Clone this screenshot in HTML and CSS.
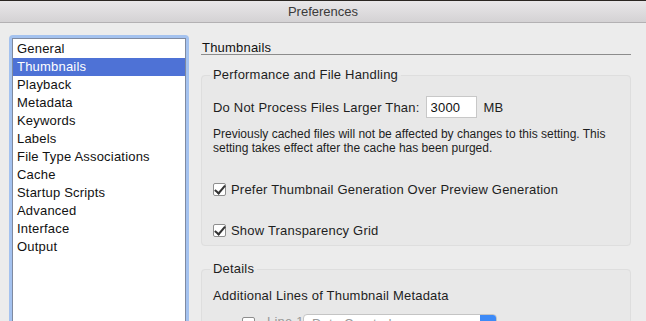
FILE: index.html
```html
<!DOCTYPE html>
<html lang="en">
<head>
    <meta charset="UTF-8">
    <title>Preferences</title>
    <link rel="stylesheet" href="styles.css">
</head>
<body>
    <div class="titlebar">Preferences</div>

    <div class="window">
        <div class="sidebar">
            <ul class="category-list">
                <li>General</li>
                <li class="selected">Thumbnails</li>
                <li>Playback</li>
                <li>Metadata</li>
                <li>Keywords</li>
                <li>Labels</li>
                <li>File Type Associations</li>
                <li>Cache</li>
                <li>Startup Scripts</li>
                <li>Advanced</li>
                <li>Interface</li>
                <li>Output</li>
            </ul>
        </div>

        <div class="panel">
            <div class="panel-title">Thumbnails</div>

            <fieldset class="group">
                <legend>Performance and File Handling</legend>
                <div class="size-row">
                    <span>Do Not Process Files Larger Than:</span>
                    <input type="text" class="size-input" value="3000">
                    <span class="unit">MB</span>
                </div>
                <p class="note">Previously cached files will not be affected by changes to this setting. This setting takes effect after the cache has been purged.</p>
                <label class="check-row first">
                    <span class="checkbox checked"></span>
                    Prefer Thumbnail Generation Over Preview Generation
                </label>
                <label class="check-row">
                    <span class="checkbox checked"></span>
                    Show Transparency Grid
                </label>
            </fieldset>

            <fieldset class="group details">
                <legend>Details</legend>
                <div class="details-label">Additional Lines of Thumbnail Metadata</div>
                <div class="meta-row">
                    <span class="checkbox"></span>
                    <span class="line-label">Line 1</span>
                    <span class="popup">
                        <span class="popup-text">Date Created</span>
                        <span class="popup-arrow"></span>
                    </span>
                </div>
            </fieldset>
        </div>
    </div>
</body>
</html>
```

FILE: styles.css
```css
* {
    margin: 0;
    padding: 0;
    box-sizing: border-box;
}

body {
    background-color: #ececec;
    color: #1e1e1e;
    font-family: "Liberation Sans", Arial, sans-serif;
    font-size: 13px;
    letter-spacing: 0.2px;
    width: 646px;
    height: 321px;
    overflow: hidden;
}

.titlebar {
    height: 23px;
    border-top: 1px solid #2b2622;
    border-bottom: 1px solid #b3b1b3;
    background: linear-gradient(#e9e7e9, #d4d2d4);
    text-align: center;
    line-height: 21px;
    letter-spacing: 0;
    color: #3a3a3a;
}

.window {
    display: flex;
    align-items: flex-start;
}

/* Category list */
.sidebar {
    margin: 12px 0 0 9px;
    width: 180px;
    height: 300px;
    padding: 3px;
    border-radius: 4px;
    background-color: #a4c2ef;
}

.category-list {
    list-style: none;
    height: 100%;
    background-color: #fff;
    border: 1px solid #7f8aa0;
    padding-top: 1px;
}

.category-list li {
    height: 18px;
    line-height: 18px;
    padding-left: 4px;
    color: #111;
}

.category-list li.selected {
    background-color: #4e72d6;
    color: #fff;
}

/* Right panel */
.panel {
    margin-left: 12px;
    width: 430px;
    padding-top: 19px;
}

.panel-title {
    height: 13px;
    line-height: 12px;
    padding-left: 1px;
    border-bottom: 1px solid #8c8c8c;
    color: #111;
}

.group {
    margin-top: 12px;
    border: 1px solid #dedede;
    border-radius: 4px;
    background-color: #e8e8e8;
    padding: 6px 11px 7px;
}

.group legend {
    padding: 0 3px;
    margin-left: -3px;
    line-height: 16px;
    color: #1e1e1e;
}

.size-row {
    display: flex;
    align-items: center;
    margin-top: 7px;
}

.size-input {
    width: 51px;
    height: 22px;
    margin-left: 6px;
    padding-left: 4px;
    border: 1px solid #c8c8c8;
    background-color: #fff;
    font-family: inherit;
    font-size: 13px;
    letter-spacing: 0.2px;
    color: #111;
}

.unit {
    margin-left: 7px;
}

.note {
    margin-top: 9px;
    font-size: 12px;
    letter-spacing: 0;
    line-height: 14px;
    width: 400px;
}

.check-row {
    display: flex;
    align-items: center;
    gap: 5px;
    height: 16px;
    margin-top: 25px;
}

.check-row.first {
    margin-top: 26px;
}

.checkbox {
    position: relative;
    width: 13px;
    height: 13px;
    border: 1px solid #8e8e8e;
    border-radius: 2px;
    background-color: #fff;
    flex-shrink: 0;
}

.checkbox.checked::after {
    content: "";
    position: absolute;
    left: 3px;
    top: -1px;
    width: 4px;
    height: 9px;
    border-right: 2px solid #333;
    border-bottom: 2px solid #333;
    transform: rotate(40deg);
}

.details {
    margin-top: 15px;
    padding-top: 5px;
    height: 80px;
}

.details-label {
    margin-top: 6px;
    line-height: 16px;
}

.meta-row {
    display: flex;
    align-items: flex-start;
    margin-top: 10px;
    padding-left: 29px;
}

.meta-row .checkbox {
    margin-top: 3px;
}

.line-label {
    margin-left: 12px;
    width: 36px;
    flex-shrink: 0;
    white-space: nowrap;
    color: #999;
}

.popup {
    display: flex;
    width: 194px;
    height: 20px;
    border: 1px solid #c4c4c4;
    border-radius: 4px;
    background-color: #fff;
    overflow: hidden;
}

.popup-text {
    flex: 1;
    padding-left: 8px;
    line-height: 18px;
    color: #999;
}

.popup-arrow {
    width: 16px;
    background-color: #3d8af7;
}
```
